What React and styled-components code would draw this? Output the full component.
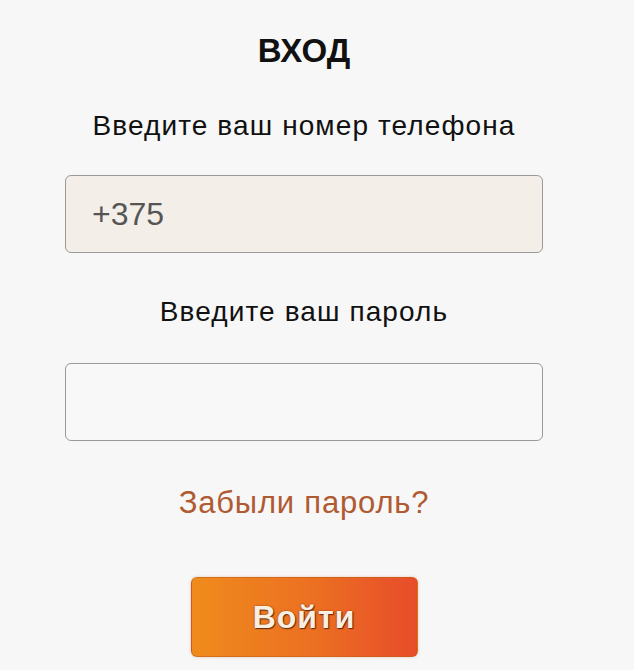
import React, { useState } from "react";
import styled, { createGlobalStyle } from "styled-components";

const GlobalStyle = createGlobalStyle`
  html, body {
    margin: 0;
    padding: 0;
    background: #f7f7f7;
  }
  body {
    font-family: "Liberation Sans", Arial, sans-serif;
  }
`;

const Page = styled.div`
  width: 634px;
  height: 670px;
  box-sizing: border-box;
  padding-left: 65px;
  overflow: hidden;
`;

const Form = styled.form`
  width: 478px;
  display: flex;
  flex-direction: column;
  align-items: center;
`;

const Title = styled.h1`
  margin: 32px 0 0;
  font-size: 33px;
  line-height: 38px;
  font-weight: bold;
  color: #111;
`;

const Label = styled.label`
  margin-top: ${(p) => p.$top}px;
  font-size: 28px;
  line-height: 30px;
  letter-spacing: 1.1px;
  color: #111;
`;

const Input = styled.input`
  box-sizing: border-box;
  width: 478px;
  height: 78px;
  margin-top: ${(p) => p.$top}px;
  padding: 0 26px;
  border: 1px solid #9a9a98;
  border-radius: 6px;
  background: ${(p) => (p.$filled ? "#f3eee8" : "#f8f8f8")};
  font-family: "Liberation Sans", Arial, sans-serif;
  font-size: 32px;
  color: #555;
  outline: none;

  &::placeholder {
    color: #555;
  }
`;

const ForgotLink = styled.a`
  margin-top: 45px;
  font-size: 31px;
  line-height: 34px;
  letter-spacing: 0.8px;
  color: #b05a32;
  text-decoration: none;
  cursor: pointer;
`;

const Button = styled.button`
  box-sizing: border-box;
  width: 227px;
  height: 80px;
  margin-top: 57px;
  border: 1px solid rgba(190, 95, 25, 0.55);
  border-radius: 6px;
  background: linear-gradient(90deg, #ef8b1c 0%, #ec6f22 55%, #e74c2a 100%);
  box-shadow: 0 0 3px rgba(200, 120, 60, 0.4);
  font-family: "Liberation Sans", Arial, sans-serif;
  font-size: 32px;
  font-weight: bold;
  letter-spacing: 1px;
  color: #f7efe2;
  text-shadow: 1px 1px 1px rgba(80, 30, 10, 0.85), 0 0 2px rgba(80, 30, 10, 0.6);
  cursor: pointer;
`;

const App = () => {
  const [phone, setPhone] = useState("+375");
  const [password, setPassword] = useState("");

  return (
    <>
      <GlobalStyle />
      <Page>
        <Form onSubmit={(e) => e.preventDefault()}>
          <Title>ВХОД</Title>
          <Label $top={41} htmlFor="phone">
            Введите ваш номер телефона
          </Label>
          <Input
            id="phone"
            $top={34}
            $filled
            value={phone}
            onChange={(e) => setPhone(e.target.value)}
          />
          <Label $top={44} htmlFor="password">
            Введите ваш пароль
          </Label>
          <Input
            id="password"
            type="password"
            $top={36}
            value={password}
            onChange={(e) => setPassword(e.target.value)}
          />
          <ForgotLink>Забыли пароль?</ForgotLink>
          <Button type="submit">Войти</Button>
        </Form>
      </Page>
    </>
  );
};

export default App;
